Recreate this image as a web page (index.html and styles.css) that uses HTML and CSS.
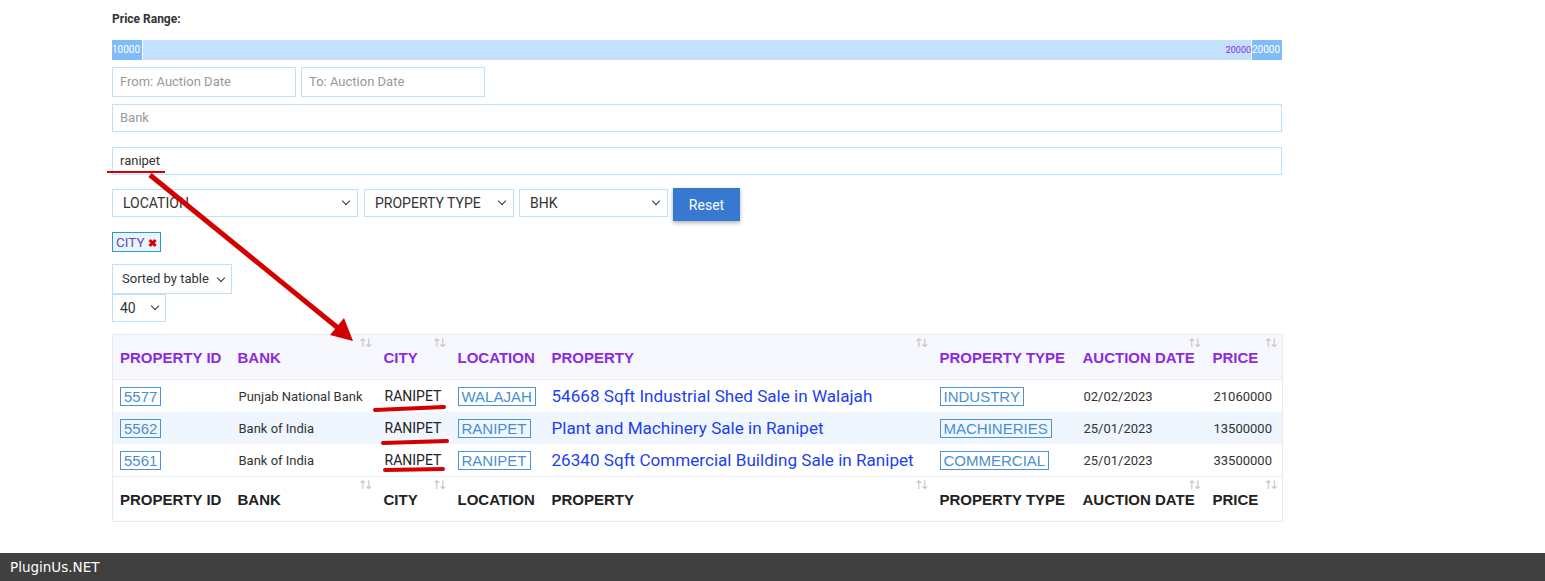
FILE: index.html
```html
<!DOCTYPE html>
<html lang="en">
<head>
  <meta charset="UTF-8" />
  <meta name="viewport" content="width=device-width, initial-scale=1.0"/>
  <title>Auction filter</title>
  <link rel="stylesheet" href="styles.css">
</head>
<body>
  <div class="page">
    <div class="filters">
      <label class="range-label">Price Range:</label>
      <div class="range">
        <span class="handle">10000</span>
        <span class="range-fill"></span>
        <span class="range-max">20000</span>
        <span class="handle">20000</span>
      </div>

      <div class="row">
        <input class="field date" type="text" placeholder="From: Auction Date">
        <input class="field date" type="text" placeholder="To: Auction Date">
      </div>
      <input class="field wide" type="text" placeholder="Bank">
      <input class="field wide search" type="text" value="ranipet">

      <div class="row selects">
        <div class="select loc">LOCATION</div>
        <div class="select ptype">PROPERTY TYPE</div>
        <div class="select bhk">BHK</div>
        <button class="reset">Reset</button>
      </div>

      <div class="chips">
        <span class="chip">CITY <b class="chip-x">&#10006;</b></span>
      </div>

      <div class="select sort">Sorted by table</div>
      <div class="select perpage">40</div>
    </div>

    <table class="grid">
      <colgroup>
        <col style="width:118px"><col style="width:146px"><col style="width:74px"><col style="width:94px">
        <col style="width:388px"><col style="width:143px"><col style="width:130px"><col style="width:77px">
      </colgroup>
      <thead>
        <tr>
          <th>PROPERTY ID</th>
          <th class="sortable">BANK</th>
          <th class="sortable">CITY</th>
          <th>LOCATION</th>
          <th class="sortable">PROPERTY</th>
          <th>PROPERTY TYPE</th>
          <th class="sortable">AUCTION DATE</th>
          <th class="sortable">PRICE</th>
        </tr>
      </thead>
      <tbody>
        <tr>
          <td><span class="tag">5577</span></td>
          <td class="small">Punjab National Bank</td>
          <td class="city">RANIPET</td>
          <td><span class="tag">WALAJAH</span></td>
          <td><a href="#">54668 Sqft Industrial Shed Sale in Walajah</a></td>
          <td><span class="tag">INDUSTRY</span></td>
          <td class="small">02/02/2023</td>
          <td class="small">21060000</td>
        </tr>
        <tr class="odd">
          <td><span class="tag">5562</span></td>
          <td class="small">Bank of India</td>
          <td class="city">RANIPET</td>
          <td><span class="tag">RANIPET</span></td>
          <td><a href="#">Plant and Machinery Sale in Ranipet</a></td>
          <td><span class="tag">MACHINERIES</span></td>
          <td class="small">25/01/2023</td>
          <td class="small">13500000</td>
        </tr>
        <tr>
          <td><span class="tag">5561</span></td>
          <td class="small">Bank of India</td>
          <td class="city">RANIPET</td>
          <td><span class="tag">RANIPET</span></td>
          <td><a href="#">26340 Sqft Commercial Building Sale in Ranipet</a></td>
          <td><span class="tag">COMMERCIAL</span></td>
          <td class="small">25/01/2023</td>
          <td class="small">33500000</td>
        </tr>
      </tbody>
      <tfoot>
        <tr>
          <th>PROPERTY ID</th>
          <th class="sortable">BANK</th>
          <th class="sortable">CITY</th>
          <th>LOCATION</th>
          <th class="sortable">PROPERTY</th>
          <th>PROPERTY TYPE</th>
          <th class="sortable">AUCTION DATE</th>
          <th class="sortable">PRICE</th>
        </tr>
      </tfoot>
    </table>
  </div>

  <footer class="bar">PluginUs.NET</footer>

  <!-- red annotation drawn over the screenshot -->
  <svg class="marks" width="1545" height="581" viewBox="0 0 1545 581">
    <line x1="107" y1="172" x2="165" y2="172" stroke="#d40000" stroke-width="2"/>
    <line x1="150" y1="175" x2="338" y2="328" stroke="#d40000" stroke-width="5"/>
    <polygon points="353,341 330,335 344,318" fill="#d40000"/>
    <path d="M375 410 L444 407" stroke="#d40000" stroke-width="4" stroke-linecap="round"/>
    <path d="M383 443 L447 441" stroke="#d40000" stroke-width="4" stroke-linecap="round"/>
    <path d="M385 470 L443 469" stroke="#d40000" stroke-width="4" stroke-linecap="round"/>
  </svg>
</body>
</html>
```

FILE: styles.css
```css
html, body {
  margin: 0;
  padding: 0;
  background: #fff;
  color: #333;
  font-family: Roboto, 'Liberation Sans', Arial, sans-serif;
}

.page {
  width: 1170px;
  padding: 12px 0 30px 112px;
}

.filters {
  display: flex;
  flex-direction: column;
  align-items: flex-start;
}

.range-label {
  font-size: 12px;
  font-weight: bold;
  color: #333;
  height: 16px;
  margin-bottom: 12px;
}

.range {
  width: 1170px;
  height: 20px;
  background: #c4e1fc;
  display: flex;
  align-items: center;
  font-size: 10px;
  margin-bottom: 7px;
}

.handle {
  background: #80bcf7;
  color: #fff;
  width: 30px;
  height: 20px;
  line-height: 20px;
  overflow: hidden;
  border-right: 1px solid #fff;
}

.handle:last-child {
  border-right: 0;
  border-left: 1px solid #fff;
}

.range-fill {
  flex: 1;
}

.range-max {
  color: #8a2be2;
  font-size: 9px;
}

.row {
  display: flex;
  gap: 5px;
}

.field {
  box-sizing: border-box;
  border: 1px solid #bfdffa;
  font-family: Roboto, sans-serif;
  font-size: 13px;
  color: #333;
  padding: 0 7px 1px;
  outline: none;
}

.field::placeholder {
  color: #999;
}

.date {
  width: 184px;
  height: 30px;
}

.wide {
  width: 1170px;
  height: 28px;
  margin-top: 7px;
}

.search {
  margin-top: 15px;
}

.selects {
  margin-top: 14px;
  align-items: flex-start;
}

.select {
  box-sizing: border-box;
  height: 28px;
  border: 1px solid #bfdffa;
  font-size: 14px;
  color: #333;
  padding: 0 10px;
  line-height: 26px;
  position: relative;
  white-space: nowrap;
}

.select::after {
  content: '';
  position: absolute;
  right: 8px;
  top: 8px;
  width: 5px;
  height: 5px;
  border-right: 1.5px solid #333;
  border-bottom: 1.5px solid #333;
  transform: rotate(45deg);
}

.loc { width: 246px; }
.ptype { width: 150px; margin-left: 1px; }
.bhk { width: 149px; }

.reset {
  margin-top: -1px;
  width: 67px;
  height: 33px;
  background: #3779d1;
  color: #fff;
  border: 0;
  font-family: Roboto, sans-serif;
  font-size: 14px;
  box-shadow: 0 2px 4px rgba(0, 0, 0, 0.3);
}

.chips {
  margin-top: 11px;
}

.chip {
  display: inline-block;
  box-sizing: border-box;
  height: 20px;
  line-height: 18px;
  padding: 0 3px;
  border: 1px solid #2a98d4;
  background: #e9f4fb;
  color: #5d4bbf;
  font-size: 13.5px;
}

.chip-x {
  color: #d40000;
  font-size: 11px;
}

.sort {
  margin-top: 12px;
  width: 120px;
  height: 30px;
  line-height: 28px;
  padding: 0 9px;
  font-size: 13px;
}

.sort::after, .perpage::after {
  right: 7px;
  top: 10px;
}

.perpage {
  width: 54px;
  height: 28px;
  padding: 0 7px;
}

.perpage::after {
  top: 8px;
}

.grid {
  margin-top: 12px;
  width: 1170px;
  table-layout: fixed;
  border-collapse: collapse;
  border: 1px solid #e8ecf2;
  font-family: 'Liberation Sans', Arial, sans-serif;
}

.grid th {
  text-align: left;
  font-size: 15px;
  height: 44px;
  padding: 0 0 0 7px;
  position: relative;
  white-space: nowrap;
}

.grid thead th {
  background: #f6f8fd;
  color: #8a2be2;
  border-bottom: 1px solid #eaeef4;
}

.grid tfoot th {
  color: #222;
  border-top: 1px solid #eaeef4;
}

.grid th.sortable::after {
  content: '\2191\2193';
  position: absolute;
  right: 3px;
  top: 1px;
  font-family: 'DejaVu Sans', sans-serif;
  font-size: 12px;
  letter-spacing: -4px;
  padding-right: 4px;
  color: #c4c4c4;
  font-weight: normal;
}

.grid td {
  height: 32px;
  padding: 0 0 0 8px;
  white-space: nowrap;
  font-family: Roboto, sans-serif;
}

.grid tr.odd td {
  background: #eff6fe;
}

.small {
  font-size: 13px;
  color: #333;
}

.city {
  font-family: 'Liberation Sans', Arial, sans-serif;
  font-size: 14px;
  color: #222;
}

.tag {
  display: inline-block;
  margin-left: -1px;
  border: 1px solid #4a93dc;
  color: #4a8fcf;
  font-family: 'Liberation Sans', Arial, sans-serif;
  font-size: 15px;
  padding: 0 3px;
  line-height: 17px;
}

.grid a {
  margin-left: -1px;
  color: #1c3ff0;
  text-decoration: none;
  font-size: 17.1px;
}

.bar {
  position: fixed;
  left: 0;
  bottom: 0;
  width: 100%;
  height: 28px;
  line-height: 28px;
  background: #404040;
  color: #fff;
  font-family: 'DejaVu Sans', sans-serif;
  font-size: 13.5px;
  padding-left: 10px;
}

.marks {
  position: absolute;
  left: 0;
  top: 0;
  pointer-events: none;
}
```
